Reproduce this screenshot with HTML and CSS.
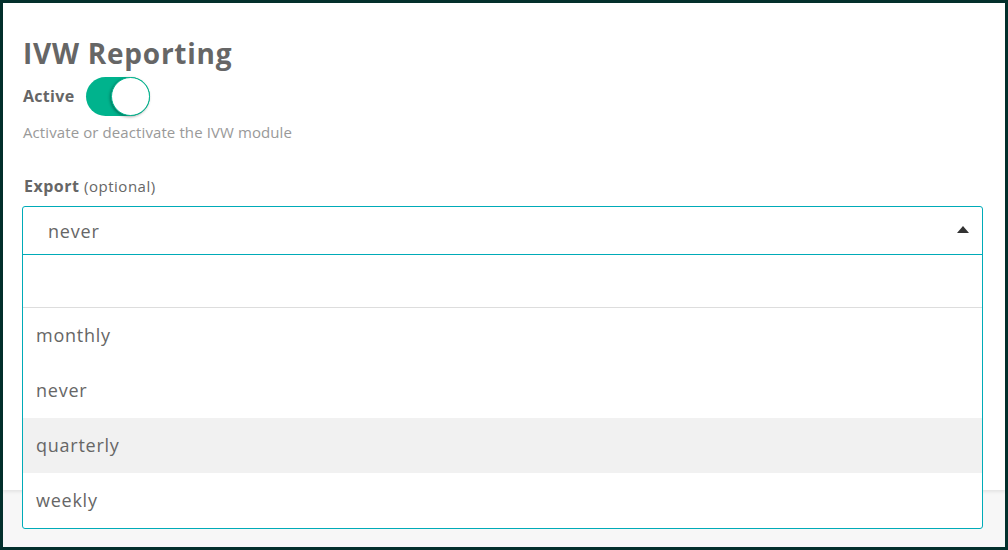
FILE: index.html
```html
<!DOCTYPE html>
<html>
<head>
<meta charset="utf-8">
<link rel="stylesheet" href="styles.css">
</head>
<body>
<div class="frame">
  <div class="card">
    <h1 class="title">IVW Reporting</h1>
    <div class="active-row">
      <span class="active-label">Active</span>
      <span class="toggle"><span class="knob"></span></span>
    </div>
    <p class="hint">Activate or deactivate the IVW module</p>
    <div class="field-label"><b>Export</b> <span class="opt">(optional)</span></div>
  </div>
  <div class="select">
    <div class="select-head">
      <span class="selected">never</span>
      <span class="caret"></span>
    </div>
    <div class="search"></div>
    <ul class="options">
      <li class="option">monthly</li>
      <li class="option">never</li>
      <li class="option hover">quarterly</li>
      <li class="option">weekly</li>
    </ul>
  </div>
</div>
</body>
</html>
```

FILE: styles.css
```css
* { box-sizing: border-box; }
html, body { margin: 0; padding: 0; }
body {
  width: 1008px;
  height: 550px;
  background: #03302c;
  font-family: "Open Sans", "Noto Sans", sans-serif;
  color: #666;
  overflow: hidden;
}
.frame {
  position: relative;
  margin: 3px 3px 3px 3px;
  width: 1002px;
  height: 544px;
  background: #f7f7f7;
}
.card {
  background: #fff;
  height: 487px;
  padding: 34px 20px 0 20px;
  box-shadow: 0 2px 3px rgba(0,0,0,0.08);
}
.title {
  margin: 0;
  font-size: 28px;
  font-weight: 700;
  line-height: 32px;
  letter-spacing: 0.75px;
  color: #666;
}
.active-row {
  display: flex;
  align-items: center;
  gap: 12px;
  margin-top: 8px;
  height: 39px;
}
.active-label {
  font-size: 16px;
  font-weight: 700;
  letter-spacing: 0.3px;
  color: #666;
  margin-top: -2px;
}
.toggle {
  position: relative;
  width: 64px;
  height: 39px;
  border-radius: 20px;
  background: #00b38d;
}
.knob {
  position: absolute;
  right: 0;
  top: 0;
  width: 39px;
  height: 39px;
  border-radius: 50%;
  background: #fff;
  border: 1px solid #00b38d;
  box-shadow: -1px 1px 3px rgba(0,0,0,0.35);
}
.hint {
  margin: 6px 0 0 0;
  font-size: 15px;
  line-height: 20px;
  letter-spacing: 0.1px;
  color: #999;
}
.field-label {
  margin-top: 34px;
  padding-left: 1px;
  line-height: 20px;
  color: #666;
  letter-spacing: 0.5px;
}
.field-label b { font-size: 16px; }
.field-label .opt { font-size: 15px; }
.select {
  position: absolute;
  left: 19px;
  top: 203px;
  width: 961px;
  height: 323px;
  background: #fff;
  border: 1px solid #00abb8;
  border-radius: 3px;
}
.select-head {
  height: 48px;
  border-bottom: 1px solid #00abb8;
  display: flex;
  align-items: center;
  justify-content: space-between;
  padding: 0 13px 0 25px;
}
.selected {
  font-size: 18px;
  letter-spacing: 0.8px;
  color: #666;
}
.caret {
  width: 0;
  height: 0;
  border-left: 6px solid transparent;
  border-right: 6px solid transparent;
  border-bottom: 7px solid #333;
  margin-top: -2px;
}
.search {
  height: 53px;
  border-bottom: 1px solid #ddd;
}
.options {
  list-style: none;
  margin: 0;
  padding: 0;
}
.option {
  height: 55px;
  display: flex;
  align-items: center;
  padding-left: 13px;
  padding-bottom: 2px;
  font-size: 18px;
  letter-spacing: 0.75px;
  color: #666;
}
.option.hover { background: #f1f1f1; }
```
